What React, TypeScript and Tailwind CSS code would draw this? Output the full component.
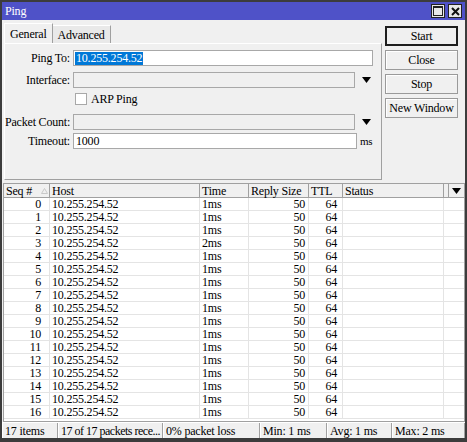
import React from 'react'

const rows = Array.from({ length: 17 }, (_, i) => ({ seq: i, time: i === 3 ? '2ms' : '1ms' }))

const cols = [
  { name: 'Seq #', w: 'w-[46px]' },
  { name: 'Host', w: 'w-[150px]' },
  { name: 'Time', w: 'w-[49px]' },
  { name: 'Reply Size', w: 'w-[60px]' },
  { name: 'TTL', w: 'w-[34px]' },
  { name: 'Status', w: 'w-[101px]' },
  { name: '', w: 'w-[5px]' },
]

function DownArrow() {
  return (
    <svg width="9" height="6" viewBox="0 0 9 6">
      <path d="M0 0h9L4.5 6z" fill="#000" />
    </svg>
  )
}

function Field({ label, children }: { label: string; children: React.ReactNode }) {
  return (
    <div className="flex items-center h-[16px]">
      <div className="w-[66px] text-right pr-[1px] whitespace-nowrap">{label}</div>
      <div className="ml-[2px] flex items-center">{children}</div>
    </div>
  )
}

function Btn({ label, primary }: { label: string; primary?: boolean }) {
  return (
    <div
      className={
        'w-[73px] h-[20px] flex items-center justify-center bg-[#f0f0f0] ' +
        (primary ? 'border-2 border-[#1e1e1e]' : 'border border-[#9a9a9a] shadow-[inset_1px_1px_0_#fff]')
      }
    >
      {label}
    </div>
  )
}

export default function App() {
  return (
    <div className="w-[467px] h-[442px] bg-[#f0f0f0] border-2 border-b-4 border-[#3c3c3c] flex flex-col font-[family-name:'Liberation_Serif',serif] text-[12px] leading-none text-black overflow-hidden tracking-[-0.2px]">
      {/* title bar */}
      <div className="h-[18px] bg-[#4f52c8] flex items-center pl-[3px] pr-[3px] shrink-0">
        <span className="text-white text-[12px]">Ping</span>
        <div className="ml-auto flex gap-[3px]">
          <div className="w-[14px] h-[14px] bg-[#e8e8e8] border border-[#222] flex items-center justify-center">
            <div className="w-[10px] h-[10px] border border-[#222] border-t-2" />
          </div>
          <div className="w-[14px] h-[14px] bg-[#e8e8e8] border border-[#222] flex items-center justify-center">
            <svg width="9" height="9" viewBox="0 0 9 9">
              <path d="M1 1L8 8M8 1L1 8" stroke="#111" strokeWidth="2" />
            </svg>
          </div>
        </div>
      </div>

      {/* top section */}
      <div className="flex h-[161px] shrink-0">
        <div className="pl-[2px] pt-[3px] flex flex-col">
          <div className="flex items-end h-[20px]">
            <div className="h-[20px] px-[5px] flex items-center border-t border-l border-white border-r border-r-[#a0a0a0] bg-[#f0f0f0]">
              General
            </div>
            <div className="h-[18px] px-[5px] flex items-center border-t border-white border-r border-r-[#a0a0a0] bg-[#e9e9e9]">
              Advanced
            </div>
          </div>
          <div className="w-[378px] h-[137px] border-l border-t border-white border-r border-b border-r-[#a0a0a0] border-b-[#a0a0a0] pt-[6px] flex flex-col">
            <Field label="Ping To:">
              <div className="w-[300px] h-[16px] bg-white border border-[#a8a8a8] flex items-center pl-[1px]">
                <span className="bg-[#0078d7] text-white px-[1px] leading-[13px]">10.255.254.52</span>
              </div>
            </Field>
            <div className="mt-[6px]">
              <Field label="Interface:">
                <div className="w-[282px] h-[16px] bg-[#f0f0f0] border border-[#a8a8a8]" />
                <div className="ml-[7px]">
                  <DownArrow />
                </div>
              </Field>
            </div>
            <div className="mt-[5px] h-[12px] flex items-center pl-[70px]">
              <div className="w-[12px] h-[12px] bg-white border border-[#a8a8a8]" />
              <span className="ml-[4px]">ARP Ping</span>
            </div>
            <div className="mt-[9px]">
              <Field label="Packet Count:">
                <div className="w-[282px] h-[16px] bg-[#f0f0f0] border border-[#a8a8a8]" />
                <div className="ml-[7px]">
                  <DownArrow />
                </div>
              </Field>
            </div>
            <div className="mt-[3px]">
              <Field label="Timeout:">
                <div className="w-[284px] h-[16px] bg-white border border-[#a8a8a8] flex items-center pl-[2px]">1000</div>
                <span className="ml-[3px] text-[11px]">ms</span>
              </Field>
            </div>
          </div>
        </div>
        <div className="ml-[3px] pt-[6px] flex flex-col gap-[4px]">
          <Btn label="Start" primary />
          <Btn label="Close" />
          <Btn label="Stop" />
          <Btn label="New Window" />
        </div>
      </div>

      {/* table */}
      <div className="mt-[2px] ml-[1px] w-[462px] flex-1 border border-[#a0a0a0] bg-white flex flex-col overflow-hidden">
        <div className="h-[14px] flex bg-[#f0f0f0] border-b border-[#a0a0a0] shrink-0">
          {cols.map((c, i) => (
            <div key={i} className={c.w + ' h-full border-r border-[#a0a0a0] flex items-center pl-[2px] whitespace-nowrap'}>
              {c.name}
              {i === 0 && (
                <svg className="ml-[9px]" width="7" height="6" viewBox="0 0 7 6">
                  <path d="M3.5 0.5L6.5 5.5H0.5z" fill="none" stroke="#c8c8c8" />
                </svg>
              )}
            </div>
          ))}
          <div className="flex-1 flex items-center justify-center">
            <DownArrow />
          </div>
        </div>
        {rows.map((r) => (
          <div key={r.seq} className="h-[13px] flex border-b border-[#e4e4e4] shrink-0">
            <div className="w-[46px] border-r border-[#e4e4e4] pr-[8px] flex items-center justify-end">{r.seq}</div>
            <div className="w-[150px] border-r border-[#e4e4e4] pl-[2px] flex items-center">10.255.254.52</div>
            <div className="w-[49px] border-r border-[#e4e4e4] pl-[2px] flex items-center">{r.time}</div>
            <div className="w-[60px] border-r border-[#e4e4e4] pr-[3px] flex items-center justify-end">50</div>
            <div className="w-[34px] border-r border-[#e4e4e4] pr-[5px] flex items-center justify-end">64</div>
            <div className="w-[101px] border-r border-[#e4e4e4]" />
            <div className="flex-1" />
          </div>
        ))}
      </div>

      {/* status bar */}
      <div className="h-[16px] flex shrink-0 border-t border-white">
        {[
          ['17 items', 'w-[56px]'],
          ['17 of 17 packets rece...', 'w-[105px] tracking-[-0.5px]'],
          ['0% packet loss', 'w-[97px]'],
          ['Min: 1 ms', 'w-[67px]'],
          ['Avg: 1 ms', 'w-[65px]'],
          ['Max: 2 ms', 'flex-1'],
        ].map(([t, w], i) => (
          <div
            key={i}
            className={w + ' h-full flex items-center pl-[2px] whitespace-nowrap border-r border-r-[#a0a0a0] border-l border-l-white'}
          >
            {t}
          </div>
        ))}
      </div>
    </div>
  )
}
